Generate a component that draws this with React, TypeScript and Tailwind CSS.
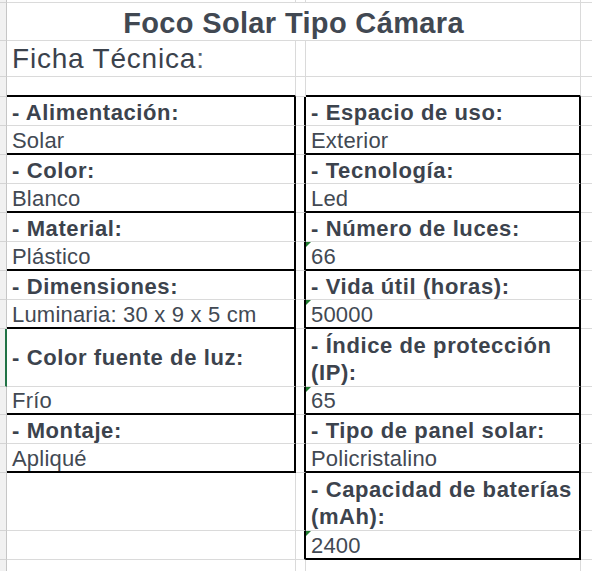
import React from 'react';
import clsx from 'clsx';

type RowProps = {
  h: string;
  a?: React.ReactNode;
  c?: React.ReactNode;
  lt?: boolean; // row belongs to left table
  rt?: boolean; // row belongs to right table
  lb?: boolean; // black bottom edge, left
  rb?: boolean; // black bottom edge, right
  flag?: boolean; // green "number as text" marker
  sel?: boolean;
  center?: boolean;
};

function Label({ children }: { children: React.ReactNode }) {
  return <span className="font-bold tracking-[0.6px] text-[#3c434d]">{children}</span>;
}

function Value({ children }: { children: React.ReactNode }) {
  return <span className="tracking-[0.2px] text-[#424953]">{children}</span>;
}

function Row({ h, a, c, lt, rt, lb, rb, flag, sel, center }: RowProps) {
  return (
    <div className={clsx('grid grid-cols-[7px_289px_10px_275px_1fr]', h)}>
      <div
        className={clsx(
          'border-b border-b-[#d4d4d4] bg-[#f1f1f1]',
          sel ? 'border-r-2 border-r-[#217346]' : 'border-r border-r-[#c6c6c6]'
        )}
      />
      <div
        className={clsx(
          'flex whitespace-nowrap pl-[5px] text-[22px] leading-[25px]',
          center ? 'items-center' : 'items-end',
          lb ? 'border-b-2 border-b-black' : 'border-b border-b-[#dadada]',
          lt ? 'border-r-2 border-r-black' : 'border-r border-r-[#dadada]'
        )}
      >
        {a}
      </div>
      <div
        className={clsx(
          'border-b border-b-[#dadada]',
          rt ? 'border-r-2 border-r-black' : 'border-r border-r-[#dadada]'
        )}
      />
      <div
        className={clsx(
          'relative flex items-end whitespace-nowrap pl-[5px] text-[22px] leading-[25px]',
          rb ? 'border-b-2 border-b-black' : 'border-b border-b-[#dadada]',
          rt ? 'border-r-2 border-r-black' : 'border-r border-r-[#dadada]'
        )}
      >
        {flag && (
          <span className="absolute left-0 top-0 h-0 w-0 border-r-[5px] border-t-[5px] border-r-transparent border-t-[#1d7a2e]" />
        )}
        {c}
      </div>
      <div className="border-b border-b-[#dadada]" />
    </div>
  );
}

export default function App() {
  return (
    <div className="h-[571px] w-[592px] overflow-hidden bg-white font-['Liberation_Sans',Arial,sans-serif]">
      <Row h="h-[3px]" />

      {/* title, merged over A:C */}
      <div className="grid h-[38px] grid-cols-[7px_574px_1fr]">
        <div className="border-b border-r border-b-[#d4d4d4] border-r-[#c6c6c6] bg-[#f1f1f1]" />
        <div className="flex items-end justify-center border-b border-r border-[#dadada] text-[29px] font-bold leading-[33px] tracking-[0.35px] text-[#414852]">
          Foco Solar Tipo Cámara
        </div>
        <div className="border-b border-[#dadada]" />
      </div>

      <div className="grid h-[36px] grid-cols-[7px_289px_10px_275px_1fr]">
        <div className="border-b border-r border-b-[#d4d4d4] border-r-[#c6c6c6] bg-[#f1f1f1]" />
        <div className="flex items-end whitespace-nowrap border-b border-r border-[#dadada] pb-[1px] pl-[5px] text-[28px] leading-[32px] tracking-[0.8px] text-[#3b424c]">
          Ficha Técnica<span className="text-[#5a6270]">:</span>
        </div>
        <div className="border-b border-r border-[#dadada]" />
        <div className="border-b border-r border-[#dadada]" />
        <div className="border-b border-[#dadada]" />
      </div>

      <Row h="h-[20px]" lb rb />

      <Row h="h-[29px]" lt rt a={<Label>- Alimentación:</Label>} c={<Label>- Espacio de uso:</Label>} />
      <Row h="h-[29px]" lt rt lb rb a={<Value>Solar</Value>} c={<Value>Exterior</Value>} />
      <Row h="h-[29px]" lt rt a={<Label>- Color:</Label>} c={<Label>- Tecnología:</Label>} />
      <Row h="h-[29px]" lt rt lb rb a={<Value>Blanco</Value>} c={<Value>Led</Value>} />
      <Row h="h-[29px]" lt rt a={<Label>- Material:</Label>} c={<Label>- Número de luces:</Label>} />
      <Row h="h-[29px]" lt rt lb rb flag a={<Value>Plástico</Value>} c={<Value>66</Value>} />
      <Row h="h-[29px]" lt rt a={<Label>- Dimensiones:</Label>} c={<Label>- Vida útil (horas):</Label>} />
      <Row h="h-[29px]" lt rt lb rb flag a={<Value>Luminaria: 30 x 9 x 5 cm</Value>} c={<Value>50000</Value>} />
      <Row
        h="h-[58px]"
        lt
        rt
        sel
        center
        a={<Label>- Color fuente de luz:</Label>}
        c={
          <span className="font-bold leading-[27px] tracking-[0.6px] text-[#3c434d]">
            - Índice de protección
            <br />
            (IP):
          </span>
        }
      />
      <Row h="h-[28px]" lt rt lb rb flag a={<Value>Frío</Value>} c={<Value>65</Value>} />
      <Row h="h-[29px]" lt rt a={<Label>- Montaje:</Label>} c={<Label>- Tipo de panel solar:</Label>} />
      <Row h="h-[29px]" lt rt lb rb a={<Value>Apliqué</Value>} c={<Value>Policristalino</Value>} />
      <Row
        h="h-[58px]"
        rt
        c={
          <span className="font-bold leading-[27px] tracking-[0.6px] text-[#3c434d]">
            - Capacidad de baterías
            <br />
            (mAh):
          </span>
        }
      />
      <Row h="h-[29px]" rt rb flag c={<Value>2400</Value>} />
      <Row h="h-[29px]" />
    </div>
  );
}
